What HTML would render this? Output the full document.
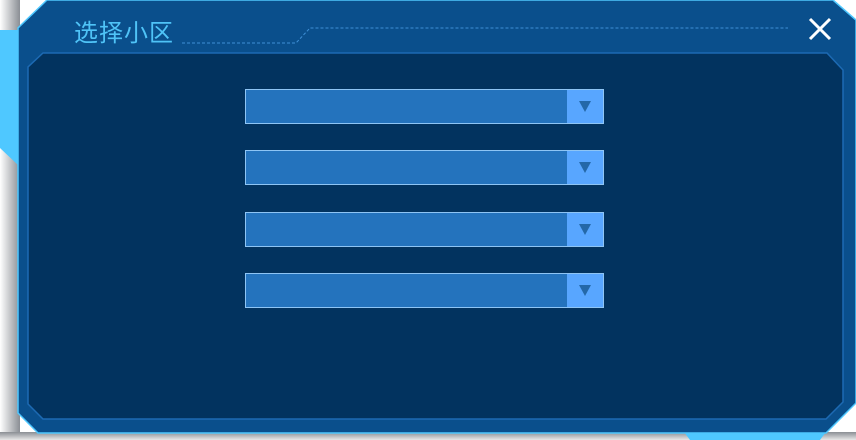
<!DOCTYPE html>
<html><head><meta charset="utf-8"><style>
html,body{margin:0;padding:0;width:856px;height:440px;overflow:hidden;background:#fff;font-family:"Liberation Sans","Noto Sans CJK SC",sans-serif}
.dd{position:absolute;left:245px;width:357px;height:33px;background:#2473bd;border:1px solid #8ec5f5}
.dd .b{position:absolute;right:0;top:0;width:36px;height:33px;background:#58a6ff}
.dd .b:after{content:"";position:absolute;left:12px;top:11px;border-left:6px solid transparent;border-right:6px solid transparent;border-top:11px solid #2468a8}
</style></head><body>
<svg width="856" height="440" style="position:absolute;left:0;top:0">
<defs>
<linearGradient id="sh" x1="0" x2="1" y1="0" y2="0"><stop offset="0" stop-color="#fff"/><stop offset="1" stop-color="#8a8e94"/></linearGradient>
<linearGradient id="shb" x1="0" x2="0" y1="0" y2="1"><stop offset="0" stop-color="#8a8e94"/><stop offset="1" stop-color="#e8e8e8"/></linearGradient>
</defs>
<rect x="0" y="0" width="20" height="440" fill="url(#sh)"/>
<rect x="0" y="432" width="856" height="8" fill="url(#shb)"/>
<polygon points="0,30 18,30 18,165 0,148" fill="#4fc8ff"/>
<polygon points="684,432 826,432 820,440 690,440" fill="#4fc8ff"/>
<polygon points="47,0 833,0 856,20 856,403 826,433 38,433 18,413 18,28" fill="#0a4f8c" stroke="#4fc8ff" stroke-width="1.5"/>
<polygon points="43,53 827,53 843,70 843,402 826,419 43,419 28,404 28,67" fill="#02335f" stroke="#1d6ab3" stroke-width="1.5"/>
<path d="M182,43 H296 L310,28 H788" stroke="#3f8fd6" stroke-width="1" fill="none" stroke-dasharray="3,2"/>
<path d="M810,19 L830,39 M830,19 L810,39" stroke="#fff" stroke-width="3"/>
</svg>
<div style="position:absolute;left:74px;top:19px;font-size:24px;line-height:30px;color:#4fc3f7;letter-spacing:1px">选择小区</div>
<div class="dd" style="top:89px"><div class="b"></div></div>
<div class="dd" style="top:150px"><div class="b"></div></div>
<div class="dd" style="top:212px"><div class="b"></div></div>
<div class="dd" style="top:273px"><div class="b"></div></div>
</body></html>
